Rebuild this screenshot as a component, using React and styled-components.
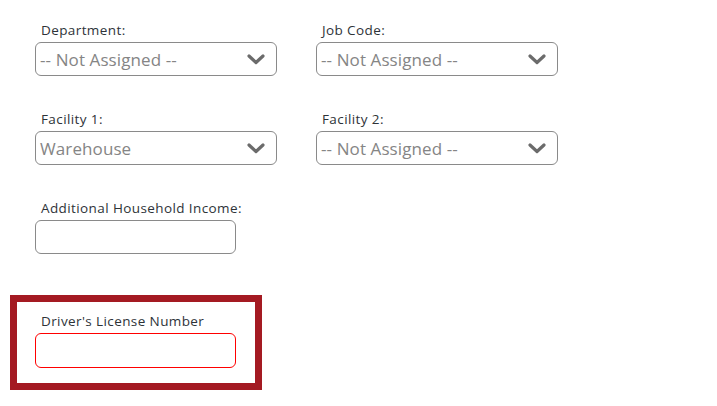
import React from 'react';
import styled, { createGlobalStyle } from 'styled-components';

const GlobalStyle = createGlobalStyle`
  html, body {
    margin: 0;
    padding: 0;
    background: #ffffff;
  }
  body {
    font-family: 'Open Sans', 'Liberation Sans', sans-serif;
  }
`;

const Chevron = () => (
  <svg width="18" height="11" viewBox="0 0 18 11">
    <path d="M2 2 L9 8.5 L16 2" fill="none" stroke="#6b6b6b" strokeWidth="3.2" strokeLinecap="round" strokeLinejoin="round" />
  </svg>
);

const SelectField = ({ label, value }) => (
  <Field>
    <Label>{label}</Label>
    <SelectBox>
      <SelectValue>{value}</SelectValue>
      <Chevron />
    </SelectBox>
  </Field>
);

const App = () => {
  return (
    <>
      <GlobalStyle />
      <Page>
        <Row>
          <SelectField label="Department:" value="-- Not Assigned --" />
          <SelectField label="Job Code:" value="-- Not Assigned --" />
        </Row>
        <Row>
          <SelectField label="Facility 1:" value="Warehouse" />
          <SelectField label="Facility 2:" value="-- Not Assigned --" />
        </Row>
        <Row>
          <Field>
            <Label>Additional Household Income:</Label>
            <TextInput />
          </Field>
        </Row>
        <Highlight>
          <Field>
            <Label>Driver's License Number</Label>
            <TextInput invalid tall />
          </Field>
        </Highlight>
      </Page>
    </>
  );
};

const Page = styled.div`
  display: flex;
  flex-direction: column;
  padding: 21px 0 0 35px;
  width: 717px;
  height: 406px;
  box-sizing: border-box;
  overflow: hidden;
`;

const Row = styled.div`
  display: flex;
  gap: 39px;
  margin-bottom: 34px;
`;

const Field = styled.div`
  display: flex;
  flex-direction: column;
`;

const Label = styled.label`
  font-size: 13.5px;
  line-height: 18px;
  letter-spacing: 0.4px;
  color: #2e3338;
  padding-left: 6px;
  margin-bottom: 3px;
`;

const SelectBox = styled.div`
  width: 242px;
  height: 34px;
  box-sizing: border-box;
  border: 1px solid #8a8a8a;
  border-radius: 6px;
  display: flex;
  align-items: center;
  justify-content: space-between;
  padding: 0 11px 0 4px;
  background: #fff;
`;

const SelectValue = styled.span`
  font-size: 17px;
  color: #858585;
  letter-spacing: 0.1px;
`;

const TextInput = styled.div`
  width: 201px;
  height: ${({ tall }) => (tall ? '35px' : '34px')};
  box-sizing: border-box;
  border: 1px solid ${({ invalid }) => (invalid ? '#ff0000' : '#8a8a8a')};
  border-radius: 6px;
  background: #fff;
`;

const Highlight = styled.div`
  align-self: flex-start;
  margin-left: -25px;
  margin-top: 7px;
  width: 252px;
  height: 95px;
  box-sizing: border-box;
  border: 7px solid #a41a22;
  padding: 10px 0 0 18px;
`;

export default App;
